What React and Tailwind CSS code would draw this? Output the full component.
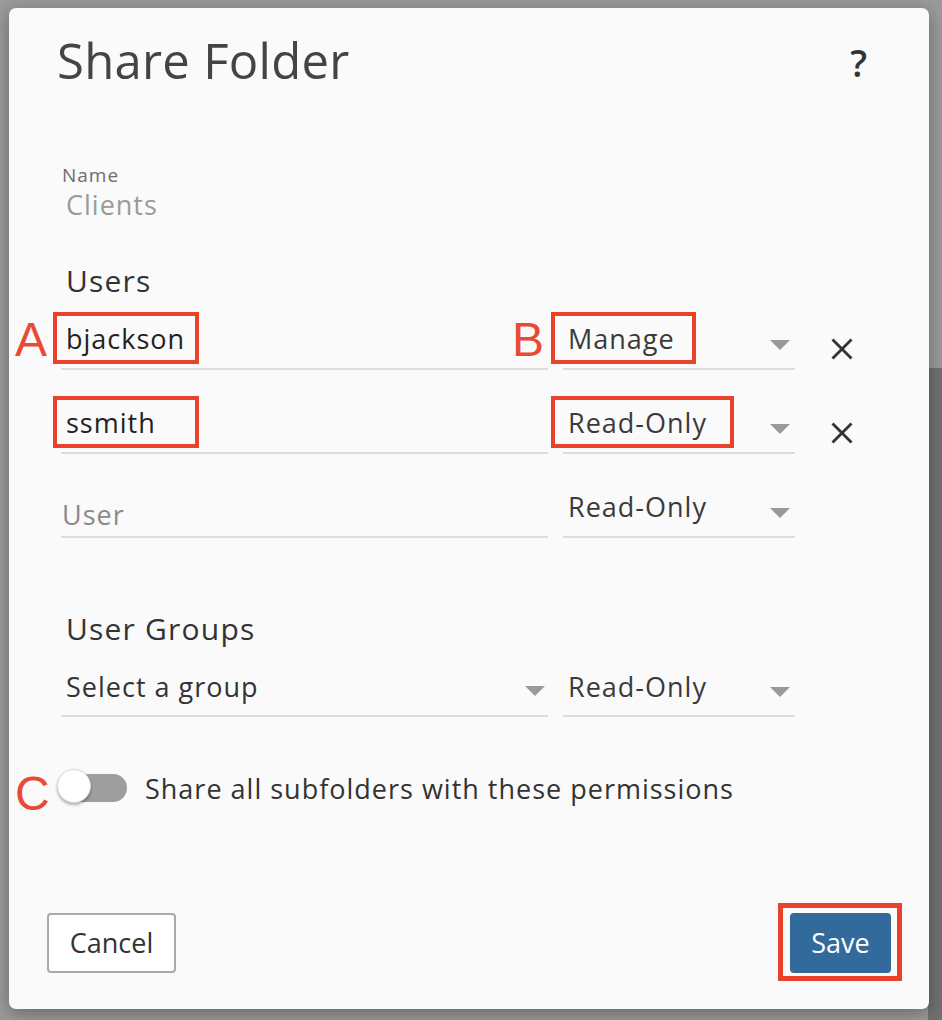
import React from "react";

const Tri = () => (
  <svg width="20" height="10" viewBox="0 0 20 10" className="shrink-0">
    <polygon points="0,0 20,0 10,10" fill="#9a9a9a" />
  </svg>
);

const XIcon = () => (
  <svg width="22" height="22" viewBox="0 0 22 22" className="shrink-0">
    <line x1="1.5" y1="1.5" x2="20.5" y2="20.5" stroke="#333" strokeWidth="2.8" />
    <line x1="20.5" y1="1.5" x2="1.5" y2="20.5" stroke="#333" strokeWidth="2.8" />
  </svg>
);

const Letter = ({ children, className }) => (
  <span
    className={
      "absolute font-['Liberation_Sans',Arial,sans-serif] text-[48px] leading-[48px] tracking-normal text-[#e84a36] " +
      className
    }
  >
    {children}
  </span>
);

function UserRow({ name, perm, letterA, letterB, boxW, permBoxW, placeholder, removable }) {
  return (
    <div className="flex items-start">
      <div className="relative w-[487px] h-[58px] border-b-2 border-[#dcdcdc] pl-[5px] shrink-0">
        {letterA && <Letter className="left-[-46px] top-[4px]">A</Letter>}
        {name ? (
          <>
            <div className="text-[27px] leading-[52px] tracking-[1px] text-[#222] pt-[1px]">{name}</div>
            <div
              className="absolute left-[-8px] top-0 h-[52px] border-[4px] border-[#e8412c]"
              style={{ width: boxW }}
            />
          </>
        ) : (
          <div className="text-[27px] leading-[52px] tracking-[1px] text-[#8a8a8a] pt-[9px] ml-[-4px]">
            {placeholder}
          </div>
        )}
      </div>
      <div className="relative ml-[15px] w-[232px] h-[58px] border-b-2 border-[#dcdcdc] pl-[5px] pr-[5px] flex items-start shrink-0">
        {letterB && <Letter className="left-[-51px] top-[4px]">B</Letter>}
        <div className="flex-1 text-[27px] leading-[52px] tracking-[1px] text-[#3a3a3a] pt-[1px]">{perm}</div>
        <div className="mt-[28px]">
          <Tri />
        </div>
        {permBoxW && (
          <div
            className="absolute left-[-12px] top-0 h-[52px] border-[4px] border-[#e8412c]"
            style={{ width: permBoxW }}
          />
        )}
      </div>
      {removable && (
        <div className="ml-[36px] mt-[26px]">
          <XIcon />
        </div>
      )}
    </div>
  );
}

export default function App() {
  return (
    <div className="relative w-[942px] h-[1020px] overflow-hidden bg-[#9b9b9b] pt-[8px] pl-[9px] font-['Open_Sans','Noto_Sans',sans-serif]">
      <div className="absolute right-0 top-[368px] w-[14px] h-[652px] bg-[#717171]" />
      <div className="relative w-[920px] h-[1001px] rounded-[7px] bg-[#fafafa] shadow-[0_4px_18px_rgba(0,0,0,0.35)] flex flex-col">
        {/* Header */}
        <div className="h-[82px] flex items-start justify-between pl-[48px] pr-[62px] pt-[22px]">
          <h1 className="text-[49px] leading-[60px] tracking-[0.3px] text-[#444] font-normal">Share Folder</h1>
          <div className="h-[60px] pt-[3px] text-[37px] leading-[60px] text-[#333] font-semibold">?</div>
        </div>

        <div className="px-[52px] flex flex-col">
          <div className="mt-[73px] pl-[1px] text-[19px] leading-[24px] tracking-[1px] text-[#6e6e6e]">Name</div>
          <div className="mt-[1px] pl-[5px] text-[27px] leading-[34px] tracking-[1px] text-[#9a9a9a]">Clients</div>

          <div className="mt-[39px] pl-[5px] text-[30px] leading-[40px] tracking-[1.2px] text-[#333]">Users</div>

          <div className="mt-[11px] flex flex-col gap-[26px]">
            <UserRow name="bjackson" perm="Manage" letterA letterB boxW={146} permBoxW={145} removable />
            <UserRow name="ssmith" perm="Read-Only" boxW={146} permBoxW={183} removable />
            <UserRow placeholder="User" perm="Read-Only" />
          </div>

          <div className="mt-[71px] pl-[5px] text-[30px] leading-[40px] tracking-[1.2px] text-[#333]">User Groups</div>

          <div className="mt-[10px] flex items-start">
            <div className="w-[487px] h-[58px] border-b-2 border-[#dcdcdc] pl-[5px] pr-[3px] flex items-start shrink-0">
              <div className="flex-1 text-[27px] leading-[52px] tracking-[1px] text-[#333] pt-[2px]">Select a group</div>
              <div className="mt-[27px]">
                <Tri />
              </div>
            </div>
            <div className="ml-[15px] w-[232px] h-[58px] border-b-2 border-[#dcdcdc] pl-[5px] pr-[5px] flex items-start shrink-0">
              <div className="flex-1 text-[27px] leading-[52px] tracking-[1px] text-[#3a3a3a] pt-[2px]">Read-Only</div>
              <div className="mt-[28px]">
                <Tri />
              </div>
            </div>
          </div>

          <div className="relative mt-[52px] flex items-center h-[34px]">
            <Letter className="left-[-46px] top-[1px]">C</Letter>
            <div className="relative w-[70px] h-[34px] ml-[-4px] shrink-0">
              <div className="absolute left-[6px] top-[5px] w-[64px] h-[28px] rounded-full bg-[#9e9e9e]" />
              <div className="absolute left-0 top-0 w-[34px] h-[34px] rounded-full bg-white border border-[#d8d8d8] shadow-[0_2px_3px_rgba(0,0,0,0.3)]" />
            </div>
            <span className="ml-[18px] pt-[6px] text-[27px] leading-[34px] tracking-[1px] text-[#333]">
              Share all subfolders with these permissions
            </span>
          </div>
        </div>

        {/* Footer */}
        <div className="mt-auto mb-[36px] px-[38px] flex items-center justify-between">
          <button className="w-[129px] h-[60px] rounded-[4px] border-2 border-[#aaaaaa] bg-white text-[27px] text-[#333]">
            Cancel
          </button>
          <div className="relative">
            <div className="absolute left-[-12px] right-[-11px] top-[-10px] bottom-[-8px] border-[5px] border-[#e8412c]" />
            <button className="relative w-[101px] h-[60px] rounded-[4px] bg-[#336a9c] text-[27px] text-white">
              Save
            </button>
          </div>
        </div>
      </div>
    </div>
  );
}
